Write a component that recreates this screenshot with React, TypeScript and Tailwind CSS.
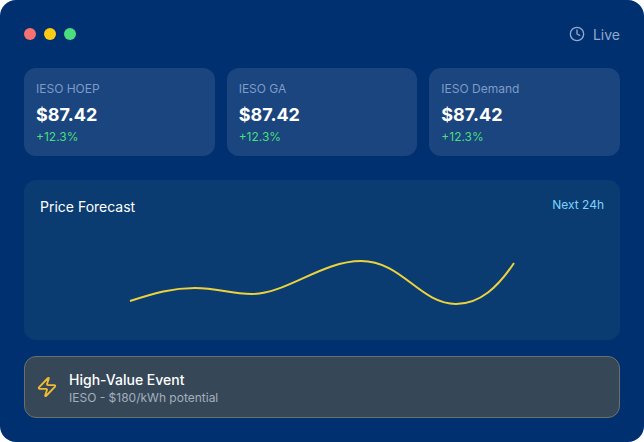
import { Clock, Zap } from "lucide-react";

const metrics = ["IESO HOEP", "IESO GA", "IESO Demand"];

function MetricCard({ label }: { label: string }) {
  return (
    <div className="rounded-xl bg-white/10 px-3 pt-[13px] pb-[11px]">
      <p className="text-xs text-[#7f9cc9]">{label}</p>
      <p className="mt-1 text-lg font-bold text-white">$87.42</p>
      <p className="text-xs text-[#4ade80]">+12.3%</p>
    </div>
  );
}

export default function App() {
  return (
    <div className="h-[442px] w-[644px] bg-white font-['Inter',sans-serif]">
      <div className="h-full rounded-2xl bg-[#003070] p-6">
        {/* Header */}
        <div className="mb-6 flex h-5 items-center justify-between">
          <div className="flex items-center gap-2">
            <span className="h-3 w-3 rounded-full bg-[#f87171]" />
            <span className="h-3 w-3 rounded-full bg-[#facc15]" />
            <span className="h-3 w-3 rounded-full bg-[#4ade80]" />
          </div>
          <div className="flex items-center gap-2 text-sm text-[#93a9cc]">
            <Clock size={16} />
            <span className="pt-0.5">Live</span>
          </div>
        </div>

        {/* Metrics */}
        <div className="mb-6 grid grid-cols-3 gap-3">
          {metrics.map((m) => (
            <MetricCard key={m} label={m} />
          ))}
        </div>

        {/* Chart */}
        <div className="mb-4 h-40 rounded-xl bg-[#0a3c71] px-4 pt-[17px]">
          <div className="flex items-start justify-between">
            <p className="text-sm text-white">Price Forecast</p>
            <p className="text-xs text-[#7dd3fc]">Next 24h</p>
          </div>
          <svg className="block" width="564" height="100" viewBox="0 0 564 100" fill="none">
            <path
              d="M90 84C115 76 132 71 155 71C178 71 190 77 212 77C246 77 282 44 321 44C362 44 380 87 416 87C440 87 458 70 474 46"
              stroke="#edd23c"
              strokeWidth="2"
            />
          </svg>
        </div>

        {/* Event */}
        <div className="flex items-center gap-3 rounded-xl border border-[#69716c] bg-[#364858] px-3 pt-[13px] pb-[11px]">
          <Zap size={22} className="-mx-px -mt-0.5 text-[#f2bb35]" />
          <div>
            <p className="text-sm font-medium text-white">High-Value Event</p>
            <p className="text-xs text-[#a3afbd]">IESO - $180/kWh potential</p>
          </div>
        </div>
      </div>
    </div>
  );
}
